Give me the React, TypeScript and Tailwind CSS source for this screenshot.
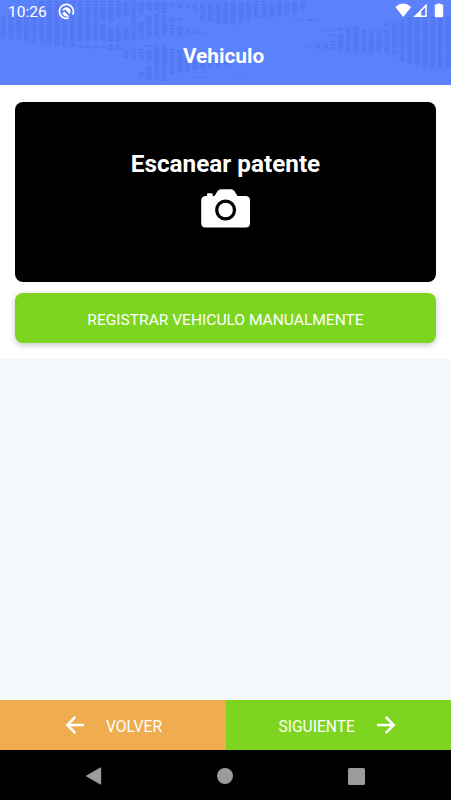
import React from "react";

// Vertical extents of the dashes in each column of the header texture.
const columns: number[][][] = [
  [[17, 38]], [[15, 39]], [[14, 40]], [[12, 42]], [[10, 44]], [[1, 44]], [[1, 45]], [[1, 46]], [[1, 47]], [[1, 47]],
  [[1, 42], [45, 48]], [[1, 41], [46, 49]], [[1, 20], [22, 41], [46, 49]], [[1, 20], [24, 41], [46, 49]],
  [[1, 22], [28, 42], [45, 50]], [[1, 18], [27, 42], [45, 51]], [[2, 16], [28, 40], [50, 58]],
  [[1, 25], [26, 41], [49, 59]], [[2, 15], [22, 39], [49, 60], [72, 78]],
  [[2, 11], [16, 37], [45, 47], [50, 60], [66, 80]], [[2, 11], [14, 36], [45, 80]], [[2, 13], [15, 35], [45, 81]],
  [[3, 7], [17, 22], [25, 36], [49, 74]], [[3, 8], [18, 21], [26, 36], [50, 73]], [[4, 8], [28, 33], [52, 71]],
  [[4, 11], [29, 34], [53, 70], [77, 78]], [[4, 20], [32, 33], [60, 69], [77, 78]], [[3, 22], [60, 68]],
  [[3, 24], [62, 67]], [[2, 24], [62, 66]], [[1, 25], [77, 78]], [[2, 22], [78, 79]], [[2, 20]], [[1, 18]], [[1, 17]], [[2, 17]],
  [[1, 16]], [[2, 15]], [[2, 15], [20, 21]], [[1, 10], [20, 21]], [[19, 21], [47, 48]], [[20, 21], [43, 49]],
  [[30, 31], [43, 50]], [[30, 31], [34, 36], [41, 50]], [[28, 31], [34, 51]], [[27, 53]], [[26, 53]], [[30, 53]],
  [[31, 53]], [[31, 52]], [[23, 26], [30, 53]], [[23, 55]], [[20, 62]], [[17, 64]], [[10, 66]], [[17, 68]],
  [[17, 68]], [[17, 68]], [[17, 68]],
];

function HeaderTexture() {
  return (
    <svg className="absolute inset-0" width="451" height="85" aria-hidden="true">
      <g stroke="#5277f0" strokeWidth="5">
        {columns.map((segments, i) =>
          segments.map(([top, bottom]) => (
            <g key={`${i}-${top}`}>
              <line x1={3.4 + i * 7.667} x2={3.4 + i * 7.667} y1={top} y2={bottom} opacity="0.2" />
              <line x1={3.4 + i * 7.667} x2={3.4 + i * 7.667} y1={top} y2={bottom} strokeDasharray="1.9 1" />
            </g>
          )),
        )}
      </g>
    </svg>
  );
}

function StatusBar() {
  return (
    <div className="relative flex h-6 items-start justify-between pl-2 pr-[7px]">
      <div className="flex items-center">
        <span className="w-[50px] pt-px text-[15.5px] leading-[23px]">10:26</span>
        <svg className="-mt-px" width="17" height="17" viewBox="0 0 17 17" fill="none">
          <path d="M10.7 15A7 7 0 1 1 14.6 11.6" stroke="white" strokeWidth="1.7" />
          <path d="M4.3 8.4Q4.8 4.4 8.6 4.3 12.7 4.6 12.7 9.2L11.6 11 7.6 6.8Q5.4 6.4 4.3 8.4Z" fill="white" />
          <path d="M4.4 10.2 6.4 8.6 11.2 13.4Q6.4 14.6 4.4 10.2Z" fill="white" />
        </svg>
      </div>
      <svg className="mt-[3px]" width="49" height="16" viewBox="0 0 49 16" fill="white">
        <path d="M.3 3.9Q8.2-2.9 16.2 3.9L8.2 14Z" />
        <path fillRule="evenodd" d="M18.3 14 31.8.5V14ZM26.3 12.5H30.3V4.3L26.3 8.3Z" />
        <path d="M42 1V.2H45V1H46.5Q47.8 1 47.8 2.3V12.8Q47.8 14 46.5 14H40.7Q39.4 14 39.4 12.8V2.3Q39.4 1 40.7 1Z" transform="translate(.4 .3)" />
      </svg>
    </div>
  );
}

function ArrowIcon({ className = "" }: { className?: string }) {
  return (
    <svg className={className} width="20" height="20" viewBox="0 0 20 20" fill="none" stroke="white" strokeWidth="2.5">
      <path d="M19 10H2.8M10.3 1.9 2.3 10 10.3 18.1" />
    </svg>
  );
}

export default function App() {
  return (
    <div className="flex h-[800px] w-[451px] flex-col overflow-hidden bg-[#f4f8fa] font-['Roboto',sans-serif] text-white">
      <header className="relative h-[85.4px] shrink-0 bg-[#5c81fc]">
        <HeaderTexture />
        <StatusBar />
        <h1 className="relative pl-0.5 pr-1.5 pt-4 text-center text-[20.8px] font-bold leading-8">Vehiculo</h1>
      </header>

      <main className="flex-1">
        <section className="flex h-[273.6px] flex-col gap-[11px] bg-white px-[15px] pt-[16.6px]">
          <button className="flex h-[180.5px] shrink-0 flex-col items-center rounded-lg bg-black pt-[46px]">
            <span className="text-[24.3px] font-bold leading-8">Escanear patente</span>
            <svg className="mt-[9px]" width="49" height="39" viewBox="0 0 49 39">
              <path
                fill="white"
                d="M5 7H6V5.5Q6 4.3 7.2 4.3H10.5Q11.7 4.3 11.7 5.5V7H13.5L16.8 1.8Q18 .3 20 .3H30Q32 .3 33.2 1.8L36.5 7H44.5Q49 7 49 11.5V34Q49 38.5 44.5 38.5H4.7Q.2 38.5 .2 34V11.5Q.2 7 5 7Z"
              />
              <circle cx="24.6" cy="21" r="8.9" fill="none" stroke="black" strokeWidth="3.3" />
            </svg>
          </button>
          <button className="h-[49.5px] shrink-0 rounded-lg bg-[#7ed520] pt-1 text-[15.55px] shadow-[0_2px_6px_rgba(0,0,0,0.23)]">
            REGISTRAR VEHICULO MANUALMENTE
          </button>
        </section>
      </main>

      <div className="flex h-[50px] shrink-0 text-[15.6px]">
        <button className="flex w-[225.5px] items-center bg-[#f0ad4f] pl-[65px]">
          <ArrowIcon />
          <span className="ml-[21px] pt-[5px]">VOLVER</span>
        </button>
        <button className="flex flex-1 items-center bg-[#7ed520] pl-[53px]">
          <span className="w-[97px] pt-[5px] text-left">SIGUIENTE</span>
          <ArrowIcon className="rotate-180" />
        </button>
      </div>

      <nav className="flex h-[50px] shrink-0 items-center justify-between bg-black pb-px pl-[85px] pr-[86px] pt-[3px] text-[#9b9b9b]">
        <svg width="17" height="18" viewBox="0 0 17 18" fill="currentColor">
          <path d="M.5 9 15.3.4Q16.2 0 16.2 1V17Q16.2 18 15.3 17.6Z" />
        </svg>
        <span className="size-4 rounded-full bg-[#9b9b9b]" />
        <span className="h-[17px] w-[17px] rounded-[1.5px] bg-[#9b9b9b]" />
      </nav>
    </div>
  );
}
